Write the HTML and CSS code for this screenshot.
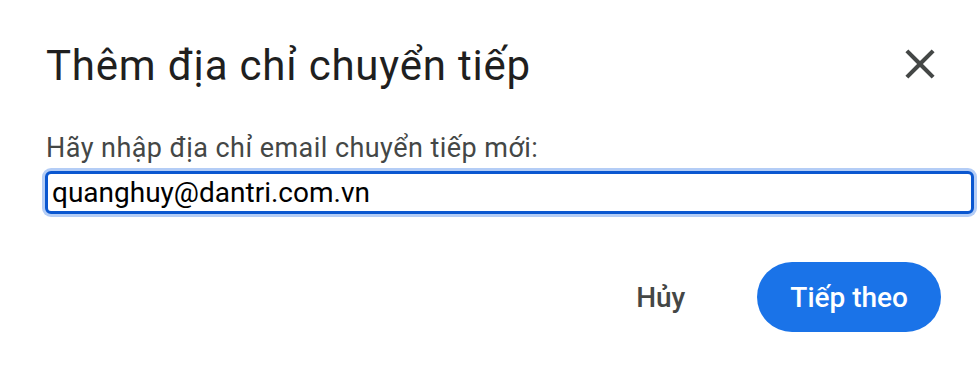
FILE: index.html
```html
<!DOCTYPE html>
<html lang="vi">
<head>
<meta charset="utf-8">
<title>Thêm địa chỉ chuyển tiếp</title>
<link rel="stylesheet" href="styles.css">
</head>
<body>
<div class="dialog">
  <div class="header">
    <h1 class="title">Thêm địa chỉ chuyển tiếp</h1>
    <button class="close" aria-label="Đóng">
      <svg viewBox="0 0 24 24" width="50" height="50"><path d="M19 6.41L17.59 5 12 10.59 6.41 5 5 6.41 10.59 12 5 17.59 6.41 19 12 13.41 17.59 19 19 17.59 13.41 12z" fill="#444746"/></svg>
    </button>
  </div>
  <label class="label" for="email">Hãy nhập địa chỉ email chuyển tiếp mới:</label>
  <input class="field" id="email" type="text" value="quanghuy@dantri.com.vn">
  <div class="actions">
    <button class="btn btn-text">Hủy</button>
    <button class="btn btn-primary">Tiếp theo</button>
  </div>
</div>
</body>
</html>
```

FILE: styles.css
```css
html, body {
  margin: 0;
  padding: 0;
  background: #ffffff;
}
body {
  font-family: Roboto, "Noto Sans", Arial, sans-serif;
  width: 980px;
  height: 374px;
  overflow: hidden;
}
.dialog {
  display: flex;
  flex-direction: column;
  padding: 42px 6px 0 45px;
}
.header {
  display: flex;
  align-items: flex-start;
  justify-content: space-between;
  height: 48px;
}
.title {
  margin: 0 0 0 1px;
  font-size: 42px;
  letter-spacing: 0.8px;
  line-height: 48px;
  font-weight: 400;
  color: #1f1f1f;
}
.close {
  width: 50px;
  height: 50px;
  margin: -3px 29px 0 0;
  padding: 0;
  border: 0;
  background: transparent;
  display: flex;
  align-items: center;
  justify-content: center;
}
.close svg {
  display: block;
}
.label {
  margin: 42px 0 0 1px;
  font-size: 27px;
  letter-spacing: 0.45px;
  line-height: 32px;
  color: #444746;
}
.field {
  box-sizing: border-box;
  margin-top: 7px;
  width: 929px;
  height: 43px;
  border: 3px solid #0b57d0;
  border-radius: 6px;
  box-shadow: 0 0 0 3px #b4cdf6;
  padding: 0 4px;
  font-family: Roboto, "Noto Sans", Arial, sans-serif;
  font-size: 28px;
  color: #000000;
  outline: none;
}
.actions {
  display: flex;
  justify-content: flex-end;
  align-items: center;
  gap: 40px;
  margin-top: 48px;
  padding-right: 33px;
}
.btn {
  height: 70px;
  border: 0;
  border-radius: 35px;
  font-family: Roboto, "Noto Sans", Arial, sans-serif;
  font-size: 28px;
  font-weight: 500;
  background: transparent;
  padding: 0 32px;
}
.btn-text {
  color: #444746;
}
.btn-primary {
  background: #1a73e8;
  color: #ffffff;
  padding: 0 33px;
}
```
